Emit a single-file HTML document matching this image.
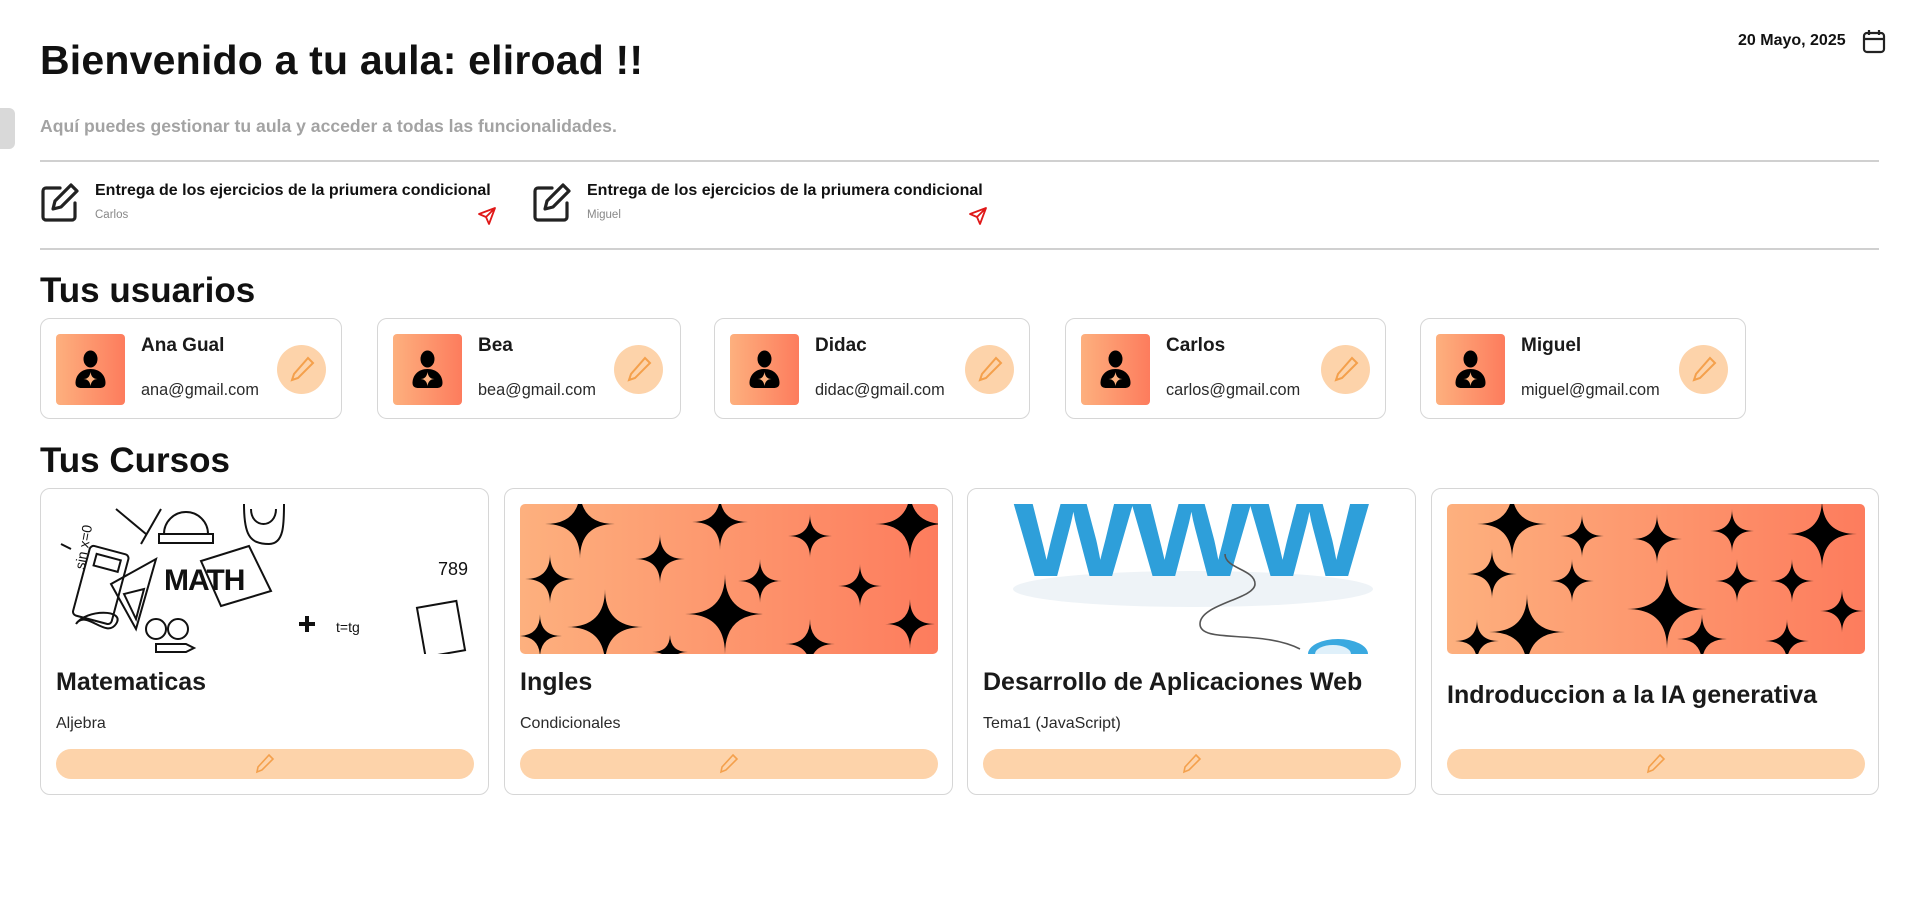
<!DOCTYPE html>
<html><head><meta charset="utf-8">
<style>
*{box-sizing:border-box;margin:0;padding:0}
body{width:1918px;height:907px;background:#fff;font-family:"Liberation Sans",sans-serif;position:relative;overflow:hidden;color:#111}
.a{position:absolute}
.h{font-family:"Liberation Sans",sans-serif;font-weight:700;color:#111}
.card{position:absolute;border:1px solid #d6d6d6;border-radius:10px;background:#fff}
.uc{top:318px;height:101px}
.av{position:absolute;left:15px;top:15px;width:69px;height:71px;border-radius:4px;background:linear-gradient(90deg,#fdb07e,#fd7c5d)}
.un{position:absolute;left:100px;top:16px;font-weight:700;font-size:19px;color:#1a1a1a}
.ue{position:absolute;left:100px;top:62px;font-size:16.3px;color:#2a2a2a}
.pc{position:absolute;top:26px;width:49px;height:49px;border-radius:50%;background:#fdd3aa}
.cc{top:488px;height:307px;width:449px}
.img{position:absolute;left:15px;top:15px;width:418px;height:150px;border-radius:5px;overflow:hidden}
.ct{position:absolute;left:15px;top:179px;font-weight:700;font-size:25px;color:#1a1a1a}
.cs{position:absolute;left:15px;top:226px;font-size:16px;color:#2a2a2a}
.btn{position:absolute;left:15px;top:260px;width:418px;height:30px;border-radius:15px;background:#fdd3aa}
</style></head><body>

<div class="a h" style="left:40px;top:37px;font-size:41px;letter-spacing:0.2px">Bienvenido a tu aula: eliroad !!</div>
<div class="a" style="left:0;top:108px;width:15px;height:41px;background:#d9d9d9;border-radius:0 6px 6px 0"></div>
<div class="a" style="left:40px;top:116px;font-size:17.6px;font-weight:700;color:#a3a3a3">Aquí puedes gestionar tu aula y acceder a todas las funcionalidades.</div>
<div class="a" style="left:1738px;top:32px;font-size:16px;font-weight:700;color:#111">20 Mayo, 2025</div>
<svg class="a" style="left:1862px;top:29px" width="24" height="25" viewBox="0 0 24 25" fill="none" stroke="#222" stroke-width="2.2"><rect x="2" y="4" width="20" height="19" rx="3"/><path d="M2 10h20M7 1v5M17 1v5"/></svg>

<div class="a" style="left:40px;top:160px;width:1839px;height:2px;background:#d0d0d0"></div>

<svg class="a" style="left:40px;top:182px" width="41" height="41" viewBox="0 0 41 41" fill="none" stroke="#222" stroke-width="3.2" stroke-linejoin="round" stroke-linecap="round"><path d="M20 6H6a3 3 0 0 0-3 3v26a3 3 0 0 0 3 3h26a3 3 0 0 0 3-3V21"/><path d="M31 3l6 6-16 16-8 2 2-8z"/></svg>
<div class="a" style="left:95px;top:182px;font-size:16px;font-weight:700">Entrega de los ejercicios de la priumera condicional</div>
<div class="a" style="left:95px;top:209px;font-size:11.5px;color:#888">Carlos</div>
<svg class="a" style="left:477px;top:206px" width="20" height="20" viewBox="0 0 20 20" fill="none" stroke="#e01818" stroke-width="1.8" stroke-linejoin="round"><path d="M18 2L2 8l7 3 3 7zM18 2L9 11"/></svg>

<svg class="a" style="left:532px;top:182px" width="41" height="41" viewBox="0 0 41 41" fill="none" stroke="#222" stroke-width="3.2" stroke-linejoin="round" stroke-linecap="round"><path d="M20 6H6a3 3 0 0 0-3 3v26a3 3 0 0 0 3 3h26a3 3 0 0 0 3-3V21"/><path d="M31 3l6 6-16 16-8 2 2-8z"/></svg>
<div class="a" style="left:587px;top:182px;font-size:16px;font-weight:700">Entrega de los ejercicios de la priumera condicional</div>
<div class="a" style="left:587px;top:209px;font-size:11.5px;color:#888">Miguel</div>
<svg class="a" style="left:968px;top:206px" width="20" height="20" viewBox="0 0 20 20" fill="none" stroke="#e01818" stroke-width="1.8" stroke-linejoin="round"><path d="M18 2L2 8l7 3 3 7zM18 2L9 11"/></svg>

<div class="a" style="left:40px;top:248px;width:1839px;height:2px;background:#d0d0d0"></div>

<div class="a h" style="left:40px;top:271px;font-size:35px">Tus usuarios</div>

<div class="card uc" style="left:40px;width:302px"><div class="av"><svg width="69" height="71" viewBox="0 0 69 71"><ellipse cx="34.5" cy="25" rx="7" ry="8.5"/><path d="M34.5 35c-10 0-15 7-15 14 0 4 3 5 6 5h18c3 0 6-1 6-5 0-7-5-14-15-14z"/><path d="M34.5 38q1 7 7 7q-6 0-7 7q-1-7-7-7q6 0 7-7z" fill="#fdb07e"/></svg></div><div class="un">Ana Gual</div><div class="ue">ana@gmail.com</div><div class="pc" style="left:236px"><svg width="49" height="49" viewBox="0 0 49 49" fill="none" stroke="#f4a04c" stroke-width="2"><path d="M31 13l5 5-15 15-6 2 2-6z"/></svg></div></div>
<div class="card uc" style="left:377px;width:304px"><div class="av"><svg width="69" height="71" viewBox="0 0 69 71"><ellipse cx="34.5" cy="25" rx="7" ry="8.5"/><path d="M34.5 35c-10 0-15 7-15 14 0 4 3 5 6 5h18c3 0 6-1 6-5 0-7-5-14-15-14z"/><path d="M34.5 38q1 7 7 7q-6 0-7 7q-1-7-7-7q6 0 7-7z" fill="#fdb07e"/></svg></div><div class="un">Bea</div><div class="ue">bea@gmail.com</div><div class="pc" style="left:236px"><svg width="49" height="49" viewBox="0 0 49 49" fill="none" stroke="#f4a04c" stroke-width="2"><path d="M31 13l5 5-15 15-6 2 2-6z"/></svg></div></div>
<div class="card uc" style="left:714px;width:316px"><div class="av"><svg width="69" height="71" viewBox="0 0 69 71"><ellipse cx="34.5" cy="25" rx="7" ry="8.5"/><path d="M34.5 35c-10 0-15 7-15 14 0 4 3 5 6 5h18c3 0 6-1 6-5 0-7-5-14-15-14z"/><path d="M34.5 38q1 7 7 7q-6 0-7 7q-1-7-7-7q6 0 7-7z" fill="#fdb07e"/></svg></div><div class="un">Didac</div><div class="ue">didac@gmail.com</div><div class="pc" style="left:250px"><svg width="49" height="49" viewBox="0 0 49 49" fill="none" stroke="#f4a04c" stroke-width="2"><path d="M31 13l5 5-15 15-6 2 2-6z"/></svg></div></div>
<div class="card uc" style="left:1065px;width:321px"><div class="av"><svg width="69" height="71" viewBox="0 0 69 71"><ellipse cx="34.5" cy="25" rx="7" ry="8.5"/><path d="M34.5 35c-10 0-15 7-15 14 0 4 3 5 6 5h18c3 0 6-1 6-5 0-7-5-14-15-14z"/><path d="M34.5 38q1 7 7 7q-6 0-7 7q-1-7-7-7q6 0 7-7z" fill="#fdb07e"/></svg></div><div class="un">Carlos</div><div class="ue">carlos@gmail.com</div><div class="pc" style="left:255px"><svg width="49" height="49" viewBox="0 0 49 49" fill="none" stroke="#f4a04c" stroke-width="2"><path d="M31 13l5 5-15 15-6 2 2-6z"/></svg></div></div>
<div class="card uc" style="left:1420px;width:326px"><div class="av"><svg width="69" height="71" viewBox="0 0 69 71"><ellipse cx="34.5" cy="25" rx="7" ry="8.5"/><path d="M34.5 35c-10 0-15 7-15 14 0 4 3 5 6 5h18c3 0 6-1 6-5 0-7-5-14-15-14z"/><path d="M34.5 38q1 7 7 7q-6 0-7 7q-1-7-7-7q6 0 7-7z" fill="#fdb07e"/></svg></div><div class="un">Miguel</div><div class="ue">miguel@gmail.com</div><div class="pc" style="left:258px"><svg width="49" height="49" viewBox="0 0 49 49" fill="none" stroke="#f4a04c" stroke-width="2"><path d="M31 13l5 5-15 15-6 2 2-6z"/></svg></div></div>

<div class="a h" style="left:40px;top:441px;font-size:35px">Tus Cursos</div>

<div class="card cc" style="left:40px">
 <div class="img" style="background:#fff">
  <svg width="418" height="150" viewBox="0 0 418 150" fill="none" stroke="#111" stroke-width="2">
   <rect x="25" y="45" width="40" height="72" rx="4" transform="rotate(15 45 80)"/><rect x="33" y="52" width="25" height="12" transform="rotate(15 45 80)"/>
   <path d="M55 80l25 45 20-70z"/><path d="M68 90l12 25 8-30z"/>
   <path d="M108 30a22 22 0 0 1 44 0z"/><rect x="103" y="30" width="54" height="9"/>
   <path d="M145 57l20 45 50-15-22-45z"/>
   <path d="M188 0c0 30 5 40 25 40 15 0 15-20 15-40"/><path d="M195 5c0 20 25 20 25 0"/>
   <rect x="365" y="100" width="40" height="50" transform="rotate(-10 385 125)"/>
   <path d="M20 120c10-15 30 15 40 0s-30-15-40 0z"/>
   <circle cx="100" cy="125" r="10"/><circle cx="122" cy="125" r="10"/>
   <path d="M100 140h30l8 4-8 4h-30z"/>
   <path d="M60 5l30 25M105 5l-20 35M5 40l10 5"/>
   <path d="M243 120h16M251 112v16" stroke-width="4"/>
  </svg>
  <div class="a" style="left:108px;top:60px;font-size:30px;font-weight:900;color:#111;letter-spacing:-1px">MATH</div>
  <div class="a" style="left:5px;top:35px;font-size:14px;color:#111;transform:rotate(-80deg)">sin x=0</div>
  <div class="a" style="left:382px;top:55px;font-size:18px;color:#111">789</div>
  <div class="a" style="left:280px;top:115px;font-size:14px;color:#111">t=tg</div>
 </div>
 <div class="ct">Matematicas</div><div class="cs">Aljebra</div>
 <div class="btn"><svg style="position:absolute;left:197px;top:4px" width="24" height="22" viewBox="0 0 24 22" fill="none" stroke="#f4a04c" stroke-width="1.6"><path d="M16 2l4 4-11 11-5 2 1-5z"/></svg></div>
</div>

<div class="card cc" style="left:504px">
 <div class="img"><svg width="418" height="150" viewBox="0 0 418 150"><defs><linearGradient id="g1"><stop offset="0" stop-color="#fdb07e"/><stop offset="1" stop-color="#fd7c5d"/></linearGradient></defs><rect width="418" height="150" fill="url(#g1)"/>
 <g fill="#000">
 <path d="M60 -15q0 35 35 35q-35 0-35 35q0-35-35-35q35 0 35-35z"/>
 <path d="M140 30q0 25 25 25q-25 0-25 25q0-25-25-25q25 0 25-25z"/>
 <path d="M200 -10q0 28 28 28q-28 0-28 28q0-28-28-28q28 0 28-28z"/>
 <path d="M290 10q0 22 22 22q-22 0-22 22q0-22-22-22q22 0 22-22z"/>
 <path d="M390 -15q0 35 35 35q-35 0-35 35q0-35-35-35q35 0 35-35z"/>
 <path d="M30 50q0 25 25 25q-25 0-25 25q0-25-25-25q25 0 25-25z"/>
 <path d="M240 55q0 22 22 22q-22 0-22 22q0-22-22-22q22 0 22-22z"/>
 <path d="M340 60q0 22 22 22q-22 0-22 22q0-22-22-22q22 0 22-22z"/>
 <path d="M205 70q0 40 40 40q-40 0-40 40q0-40-40-40q40 0 40-40z"/>
 <path d="M85 85q0 38 38 38q-38 0-38 38q0-38-38-38q38 0 38-38z"/>
 <path d="M20 110q0 22 22 22q-22 0-22 22q0-22-22-22q22 0 22-22z"/>
 <path d="M390 95q0 25 25 25q-25 0-25 25q0-25-25-25q25 0 25-25z"/>
 <path d="M290 115q0 25 25 25q-25 0-25 25q0-25-25-25q25 0 25-25z"/>
 <path d="M150 130q0 18 18 18q-18 0-18 18q0-18-18-18q18 0 18-18z"/>
 </g></svg></div>
 <div class="ct">Ingles</div><div class="cs">Condicionales</div>
 <div class="btn"><svg style="position:absolute;left:197px;top:4px" width="24" height="22" viewBox="0 0 24 22" fill="none" stroke="#f4a04c" stroke-width="1.6"><path d="M16 2l4 4-11 11-5 2 1-5z"/></svg></div>
</div>

<div class="card cc" style="left:967px">
 <div class="img" style="background:#fff;border-radius:0">
  <svg width="418" height="150" viewBox="0 0 418 150">
   <ellipse cx="210" cy="85" rx="180" ry="18" fill="#eef3f7"/>
   <text x="25" y="72" font-family="Liberation Sans" font-weight="700" font-size="118" fill="#2e9fda" letter-spacing="-6" transform="scale(1.12 1)">WWW</text>
   <path d="M242 50c0 15 30 15 30 30s-55 20-55 40 60 5 100 25" fill="none" stroke="#555" stroke-width="1.6"/>
   <ellipse cx="355" cy="150" rx="30" ry="15" fill="#3aa9e0"/><ellipse cx="350" cy="150" rx="18" ry="9" fill="#dff0fa"/>
  </svg>
 </div>
 <div class="ct">Desarrollo de Aplicaciones Web</div><div class="cs">Tema1 (JavaScript)</div>
 <div class="btn"><svg style="position:absolute;left:197px;top:4px" width="24" height="22" viewBox="0 0 24 22" fill="none" stroke="#f4a04c" stroke-width="1.6"><path d="M16 2l4 4-11 11-5 2 1-5z"/></svg></div>
</div>

<div class="card cc" style="left:1431px;width:448px">
 <div class="img"><svg width="418" height="150" viewBox="0 0 418 150"><defs><linearGradient id="g2"><stop offset="0" stop-color="#fdb07e"/><stop offset="1" stop-color="#fd7c5d"/></linearGradient></defs><rect width="418" height="150" fill="url(#g2)"/>
 <g fill="#000">
 <path d="M65 -15q0 35 35 35q-35 0-35 35q0-35-35-35q35 0 35-35z"/>
 <path d="M45 45q0 25 25 25q-25 0-25 25q0-25-25-25q25 0 25-25z"/>
 <path d="M135 10q0 22 22 22q-22 0-22 22q0-22-22-22q22 0 22-22z"/>
 <path d="M210 10q0 25 25 25q-25 0-25 25q0-25-25-25q25 0 25-25z"/>
 <path d="M285 5q0 22 22 22q-22 0-22 22q0-22-22-22q22 0 22-22z"/>
 <path d="M375 -5q0 35 35 35q-35 0-35 35q0-35-35-35q35 0 35-35z"/>
 <path d="M125 55q0 22 22 22q-22 0-22 22q0-22-22-22q22 0 22-22z"/>
 <path d="M290 55q0 22 22 22q-22 0-22 22q0-22-22-22q22 0 22-22z"/>
 <path d="M345 55q0 22 22 22q-22 0-22 22q0-22-22-22q22 0 22-22z"/>
 <path d="M220 65q0 40 40 40q-40 0-40 40q0-40-40-40q40 0 40-40z"/>
 <path d="M80 90q0 38 38 38q-38 0-38 38q0-38-38-38q38 0 38-38z"/>
 <path d="M30 115q0 22 22 22q-22 0-22 22q0-22-22-22q22 0 22-22z"/>
 <path d="M395 85q0 22 22 22q-22 0-22 22q0-22-22-22q22 0 22-22z"/>
 <path d="M340 115q0 22 22 22q-22 0-22 22q0-22-22-22q22 0 22-22z"/>
 <path d="M255 110q0 25 25 25q-25 0-25 25q0-25-25-25q25 0 25-25z"/>
 </g></svg></div>
 <div class="ct" style="top:192px">Indroduccion a la IA generativa</div>
 <div class="btn"><svg style="position:absolute;left:197px;top:4px" width="24" height="22" viewBox="0 0 24 22" fill="none" stroke="#f4a04c" stroke-width="1.6"><path d="M16 2l4 4-11 11-5 2 1-5z"/></svg></div>
</div>

</body></html>
